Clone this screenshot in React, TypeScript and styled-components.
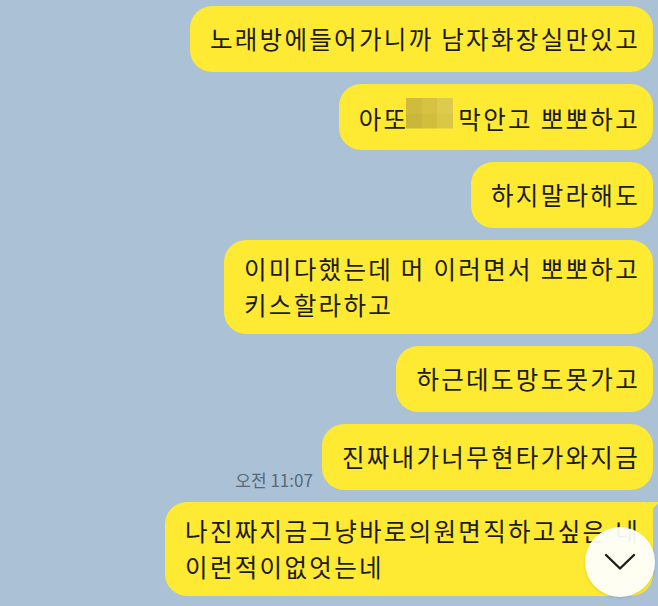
import React from "react";
import styled, { createGlobalStyle } from "styled-components";

const GlobalStyle = createGlobalStyle`
  html, body {
    margin: 0;
    padding: 0;
    background: #abc1d5;
  }
  body {
    font-family: "Noto Sans CJK KR", "Noto Sans", sans-serif;
  }
`;

const Page = styled.div`
  position: relative;
  width: 658px;
  height: 606px;
  overflow: hidden;
  box-sizing: border-box;
  padding: 6px 5px 0 0;
  background: #abc1d5;
  display: flex;
  flex-direction: column;
  align-items: flex-end;
  gap: 12px;
`;

const Row = styled.div`
  display: flex;
  align-items: flex-end;
  justify-content: flex-end;
  gap: 9px;
`;

const Time = styled.span`
  font-size: 17px;
  line-height: 1;
  color: #57687a;
  padding-bottom: 2px;
  white-space: nowrap;
`;

const Bubble = styled.div<{ $tail?: boolean }>`
  position: relative;
  box-sizing: border-box;
  min-height: 66px;
  display: flex;
  align-items: center;
  padding: 11px 13px 11px 20px;
  background: #fee933;
  color: #1b1b1b;
  border-radius: ${(p) => (p.$tail ? "22px 8px 22px 22px" : "22px")};
  font-size: 24.5px;
  line-height: 36px;
  letter-spacing: 2.3px;
  white-space: nowrap;

  ${(p) =>
    p.$tail &&
    `
    &::after {
      content: "";
      position: absolute;
      top: 0;
      right: -7px;
      width: 0;
      height: 0;
      border-top: 11px solid #fee933;
      border-right: 12px solid transparent;
    }
  `}
`;

const Text = styled.span`
  display: block;
`;

const Mosaic = styled.span`
  display: inline-block;
  width: 47px;
  height: 31px;
  margin: 0 5px 0 -2px;
  vertical-align: 0;
  background-image:
    linear-gradient(to right, #cfbc3f 0 33%, #d7c341 33% 66%, #ddcc4c 66% 100%),
    linear-gradient(to right, #c9b63a 0 33%, #d1be3c 33% 66%, #d9c846 66% 100%);
  background-size: 100% 50%, 100% 50%;
  background-position: top, bottom;
  background-repeat: no-repeat;
`;

const ScrollButton = styled.div`
  position: absolute;
  left: 585px;
  top: 527px;
  width: 70px;
  height: 70px;
  border-radius: 50%;
  background: rgba(255, 255, 255, 0.94);
  box-shadow: 0 1px 3px rgba(0, 0, 0, 0.12);
  display: flex;
  align-items: center;
  justify-content: center;
`;

export default function App() {
  return (
    <>
      <GlobalStyle />
      <Page>
        <Row>
          <Bubble>
            <Text>노래방에들어가니까 남자화장실만있고</Text>
          </Bubble>
        </Row>
        <Row>
          <Bubble>
            <Text>
              아또
              <Mosaic />
              막안고 뽀뽀하고
            </Text>
          </Bubble>
        </Row>
        <Row>
          <Bubble>
            <Text>하지말라해도</Text>
          </Bubble>
        </Row>
        <Row>
          <Bubble>
            <Text>
              이미다했는데 머 이러면서 뽀뽀하고
              <br />
              키스할라하고
            </Text>
          </Bubble>
        </Row>
        <Row>
          <Bubble>
            <Text>하근데도망도못가고</Text>
          </Bubble>
        </Row>
        <Row>
          <Time>오전 11:07</Time>
          <Bubble>
            <Text>진짜내가너무현타가와지금</Text>
          </Bubble>
        </Row>
        <Row>
          <Bubble $tail>
            <Text>
              나진짜지금그냥바로의원면직하고싶은 네
              <br />
              이런적이없엇는네
            </Text>
          </Bubble>
        </Row>
        <ScrollButton>
          <svg width="32" height="18" viewBox="0 0 32 18" fill="none">
            <polyline
              points="2,2 16,15.5 30,2"
              stroke="#1c1c1c"
              strokeWidth="2.4"
              strokeLinecap="round"
              strokeLinejoin="round"
            />
          </svg>
        </ScrollButton>
      </Page>
    </>
  );
}
